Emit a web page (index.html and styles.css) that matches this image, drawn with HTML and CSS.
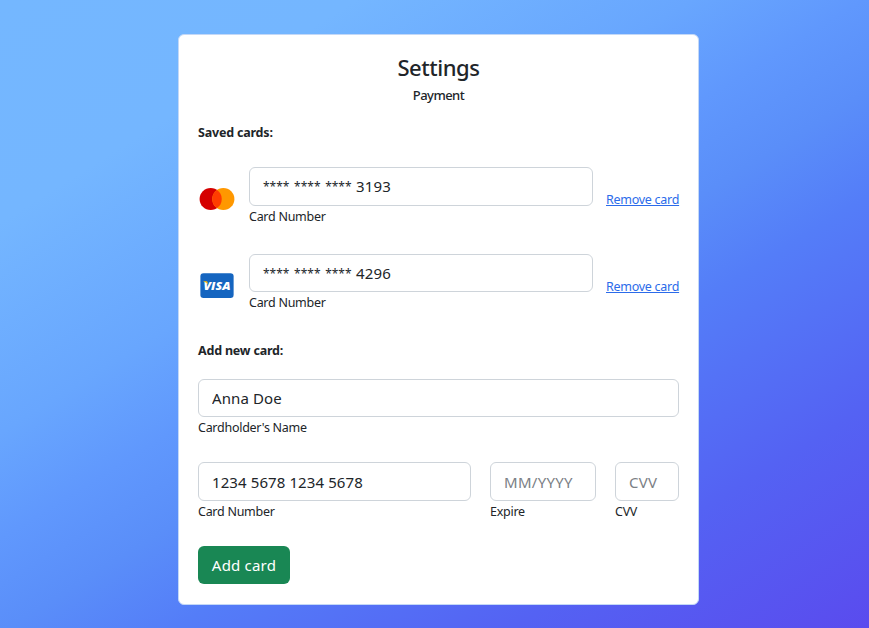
FILE: index.html
```
<!DOCTYPE html>
<html lang="en">
<head>
<meta charset="utf-8">
<title>Settings</title>
<link rel="stylesheet" href="styles.css">
</head>
<body>
<main class="card">
  <header class="head">
    <h3 class="title">Settings</h3>
    <h6 class="subtitle">Payment</h6>
  </header>
  <p class="section">Saved cards:</p>
  <div class="saved">
    <svg class="logo" width="38" height="38" viewBox="0 0 48 48">
      <circle cx="16" cy="24" r="14" fill="#d50000"/>
      <circle cx="32" cy="24" r="14" fill="#ff9800"/>
      <path d="M24 12.500a14 14 0 0 1 0 23a14 14 0 0 1 0-23z" fill="#ff3d00"/>
    </svg>
    <div class="field grow">
      <div class="input masked"><span class="stars">**** **** ****</span> 3193</div>
      <span class="label">Card Number</span>
    </div>
    <a class="remove" href="#">Remove card</a>
  </div>
  <div class="saved second">
    <svg class="logo" width="38" height="38" viewBox="0 0 48 48">
      <rect x="3" y="8" width="42" height="31" rx="4" fill="#1565c0"/>
      <text class="visa" x="24" y="29.600" text-anchor="middle" textLength="34" lengthAdjust="spacingAndGlyphs">VISA</text>
      <path d="M7 18h4.500l1.600 5c-1-2-3-3.800-6.100-4.400z" fill="#ffc107"/>
    </svg>
    <div class="field grow">
      <div class="input masked"><span class="stars">**** **** ****</span> 4296</div>
      <span class="label">Card Number</span>
    </div>
    <a class="remove" href="#">Remove card</a>
  </div>
  <p class="section add">Add new card:</p>
  <div class="field">
    <input class="input name" id="name" type="text" value="Anna Doe">
    <label class="label" for="name">Cardholder's Name</label>
  </div>
  <div class="details">
    <div class="field">
      <input class="input number" id="num" type="text" value="1234 5678 1234 5678">
      <label class="label" for="num">Card Number</label>
    </div>
    <div class="field">
      <input class="input date" id="exp" type="text" placeholder="MM/YYYY">
      <label class="label" for="exp">Expire</label>
    </div>
    <div class="field">
      <input class="input cvv" id="cvv" type="text" placeholder="CVV">
      <label class="label" for="cvv">CVV</label>
    </div>
  </div>
  <button class="button" type="button">Add card</button>
</main>
</body>
</html>
```
FILE: styles.css
```
* { box-sizing: border-box; }
body {
  margin: 0;
  height: 628px;
  overflow: hidden;
  padding: 34px 0 0 178px;
  font-family: "Noto Sans", "Open Sans", sans-serif;
  color: #212529;
  background: linear-gradient(148deg, #74b7ff 0%, #74b6ff 19%, #68a6fe 37%, #6098fd 46%, #5a8ef9 54%, #547df8 63%, #5462f3 81%, #5a4bee 100%);
}
.card {
  width: 521px;
  height: 571px;
  padding: 19px 19px 0;
  background: #fff;
  border: 1px solid #c3d8f7;
  border-radius: 6px;
}
.head { text-align: center; }
.title { margin: 0; font-size: 22px; line-height: 27px; font-weight: 500; letter-spacing: -0.45px; }
.subtitle { margin: 6px 0 0; font-size: 13px; line-height: 16px; font-weight: 500; letter-spacing: -0.55px; }
.section { margin: 20px 0 0; font-size: 12.500px; line-height: 20px; font-weight: 700; letter-spacing: -0.2px; }
.saved { display: flex; align-items: flex-start; height: 60px; margin-top: 24px; }
.saved.second { margin-top: 27px; height: 59px; }
.logo { flex: none; margin: 13px 13px 0 0; }
.field { display: flex; flex-direction: column; }
.grow { flex: 1; }
.input {
  width: 100%;
  height: 39px;
  padding: 0 13px;
  border: 1px solid #ced4da;
  border-radius: 6px;
  background: #fff;
  font: 400 15px "Noto Sans", "Open Sans", sans-serif;
  letter-spacing: 0.100px;
  color: #212529;
  outline: 0;
}
.second .input { height: 38px; }
.name { height: 38px; }
.masked.input { line-height: 37px; white-space: pre; }
.stars { font-size: 12px; letter-spacing: 0; word-spacing: 1.500px; margin-right: 0.500px; vertical-align: 1px; line-height: 1; }
.input::placeholder { color: #7b8085; opacity: 1; letter-spacing: 0.3px; }
.label { font-size: 12.500px; line-height: 21px; letter-spacing: -0.27px; }
.remove { margin: 23px 0 0 13px; width: 73px; font-size: 12.500px; line-height: 20px; letter-spacing: -0.27px; color: #2b6bea; white-space: nowrap; }
.add { margin-top: 28px; margin-bottom: 18px; }
.details { display: grid; grid-template-columns: 273px 106px 64px; gap: 19px; margin-top: 24px; }
.button {
  display: block;
  width: 92px;
  height: 38px;
  margin-top: 24px;
  padding: 0;
  border: 0;
  border-radius: 6px;
  background: #198754;
  color: #fff;
  font: 400 15px "Noto Sans", "Open Sans", sans-serif;
  letter-spacing: 0.2px;
}
.visa { font: italic 800 14px "Open Sans", sans-serif; fill: #fff; }
```
